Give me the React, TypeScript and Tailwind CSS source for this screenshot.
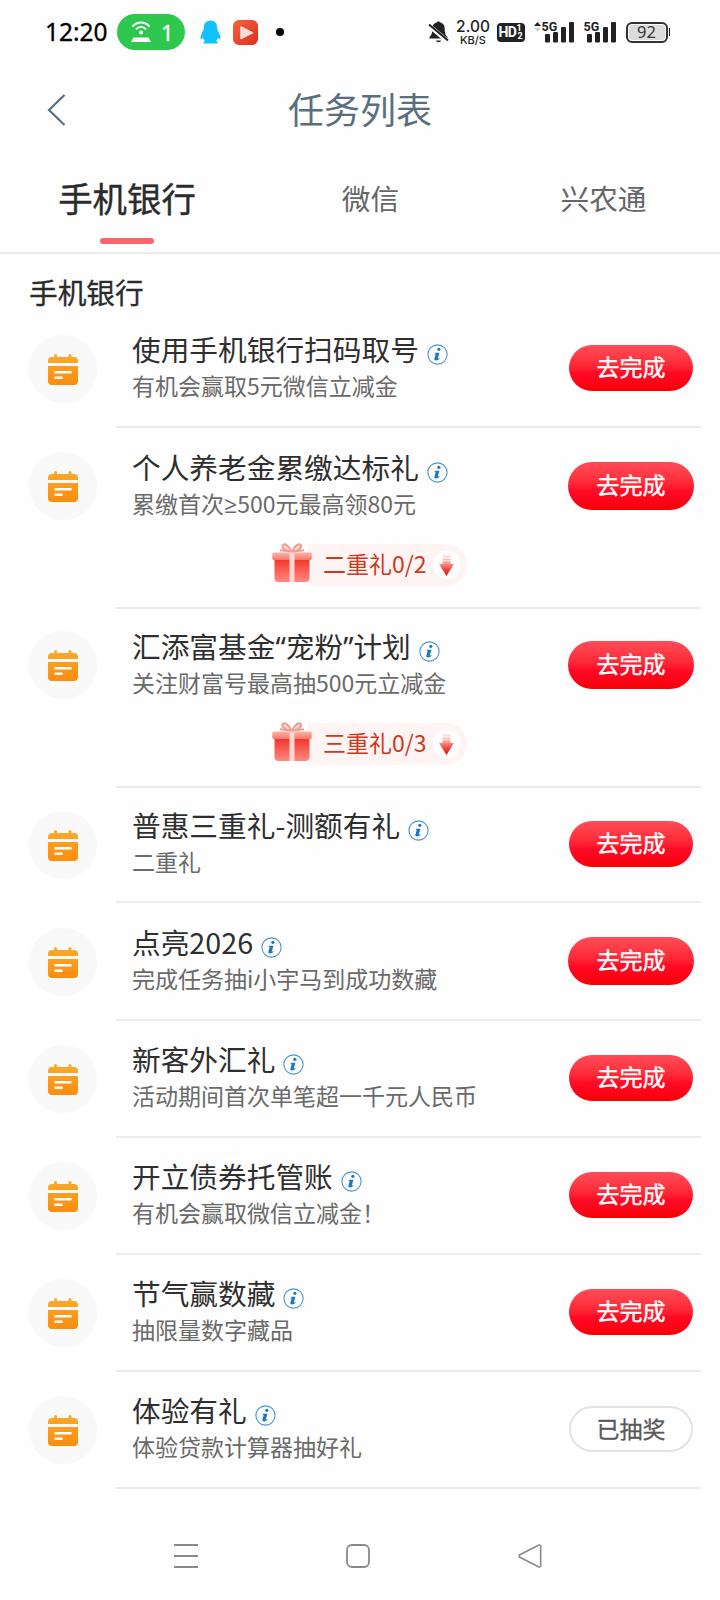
import { clsx } from "clsx";

type Task = {
  title: string;
  desc: string;
  gift?: string;
  done?: boolean;
  large?: boolean;
  size: string;
};

const tasks: Task[] = [
  { title: "使用手机银行扫码取号", desc: "有机会赢取5元微信立减金", size: "h-[118px] pt-[19px]" },
  { title: "个人养老金累缴达标礼", desc: "累缴首次≥500元最高领80元", gift: "二重礼0/2", large: true, size: "h-[181px] pt-[19px]" },
  { title: "汇添富基金“宠粉”计划", desc: "关注财富号最高抽500元立减金", gift: "三重礼0/3", large: true, size: "h-[179px] pt-[17px]" },
  { title: "普惠三重礼-测额有礼", desc: "二重礼", size: "h-[115px] pt-[17px]" },
  { title: "点亮2026", desc: "完成任务抽i小宇马到成功数藏", large: true, size: "h-[118px] pt-[19px]" },
  { title: "新客外汇礼", desc: "活动期间首次单笔超一千元人民币", size: "h-[117px] pt-[18px]" },
  { title: "开立债券托管账", desc: "有机会赢取微信立减金！", size: "h-[117px] pt-[18px]" },
  { title: "节气赢数藏", desc: "抽限量数字藏品", size: "h-[117px] pt-[18px]" },
  { title: "体验有礼", desc: "体验贷款计算器抽好礼", done: true, size: "h-[117px] pt-[18px]" },
];

// Quotes and ≥ are full width in the CJK font, so set them in the latin one
function MixedText({ text }: { text: string }) {
  return text.split(/([“”≥])/).map((part, i) =>
    /[“”≥]/.test(part) ? (
      <span key={i} className="font-['Noto_Sans','Open_Sans',sans-serif] leading-none">
        {part}
      </span>
    ) : (
      part
    )
  );
}

function Signal() {
  return (
    <svg width="29" height="21" viewBox="0 0 29 21" fill="#222">
      <rect x="0" y="12" width="5" height="8.5" rx="1" />
      <rect x="8" y="10" width="5" height="10.5" rx="1" />
      <rect x="16" y="5" width="5" height="15.5" rx="1" />
      <rect x="24" y="0" width="5" height="20.5" rx="1" />
    </svg>
  );
}

function StatusBar() {
  return (
    <div className="flex h-16 items-center pl-[45px] pr-[50px] font-['Noto_Sans','Open_Sans',sans-serif] text-black">
      <span className="w-[63px] whitespace-nowrap text-[24.5px] leading-none [-webkit-text-stroke:0.3px_black]">12:20</span>
      <div className="ml-[9px] flex h-9 w-[68px] items-center rounded-full bg-[#2fc84f] pl-[14px] text-white">
        <svg width="20" height="22" viewBox="0 0 20 22" fill="none" stroke="#fff" strokeWidth="2">
          <path d="M1.5 5.5C6 0.2 14 0.2 18.5 5.5M5 8.2c3-3 7-3 10 0" />
          <circle cx="10" cy="11.5" r="2" fill="#fff" stroke="none" />
          <path d="M2.500 16.500h15l2.500 4.500H0z" fill="#fff" stroke="none" />
        </svg>
        <span className="ml-2.5 text-[22px] leading-none [-webkit-text-stroke:0.3px_white]">1</span>
      </div>
      <svg className="ml-[15px]" width="21" height="24" viewBox="0 0 21 24" fill="#12c0fb">
        <path d="M10.5 0.5C6.3 0.5 3.8 3.5 3.8 7.5c0 1.2-.1 2.2-.7 3.4C1.4 13.6.2 16.2.5 18.8c.5 1.1 1.700-.2 2.500-1.300.2 1.500.9 2.600 1.900 3.500-1.200.5-1.600 1.300-1.400 2.500h14c.2-1.200-.2-2-1.400-2.500 1-.9 1.700-2 1.900-3.500.8 1.100 2 2.400 2.500 1.300.3-2.600-.9-5.200-2.600-7.900-.6-1.200-.7-2.200-.7-3.400 0-4-2.500-7-6.700-7z" />
      </svg>
      <svg className="ml-[12px]" width="25" height="25" viewBox="0 0 25 25">
        <defs>
          <linearGradient id="player" x1="0" y1="0" x2="1" y2="1">
            <stop offset="0" stopColor="#f4623a" />
            <stop offset="1" stopColor="#e02f1e" />
          </linearGradient>
        </defs>
        <rect width="25" height="25" rx="6" fill="url(#player)" />
        <path d="M8 7v11.500l11.500-5.700z" fill="#fde0d8" stroke="#fde0d8" strokeWidth="1.500" strokeLinejoin="round" />
      </svg>
      <span className="ml-[18px] size-2 rounded-full bg-black" />

      <div className="ml-auto flex items-center text-[#222]">
        <svg width="21" height="22" viewBox="0 0 21 22" fill="#222">
          <path d="M9 1.200C9 .4 12 .4 12 1.200c3.300.8 4.700 3.300 4.700 6.300 0 5 .8 6.500 2.800 8.500v1.500h-18V16c2-2 2.800-3.500 2.800-8.500 0-3 1.400-5.500 4.700-6.300zM8 19.500h5c-.6 2.300-4.400 2.300-5 0z" />
          <path d="M-.5 3.500 20 20.500" stroke="#fff" strokeWidth="4.500" />
          <path d="M1 3.500 20 19.500" stroke="#222" strokeWidth="2" />
        </svg>
        <div className="ml-[8px] mt-px flex w-[33px] flex-col items-center font-['Inter',sans-serif]">
          <span className="h-[14px] text-[15.5px] font-medium leading-[14px]">2.00</span>
          <span className="h-[12px] text-[11px] font-medium leading-[13px]">KB/S</span>
        </div>
        <div className="ml-[7px] flex h-[19px] w-7 items-center justify-center rounded bg-[#222] font-['Roboto',sans-serif] text-white">
          <span className="text-[14px] font-bold leading-none tracking-[-0.5px]">HD</span>
          <span className="flex flex-col text-[9px] font-bold leading-[8px]">
            <span>1</span>
            <span className="pl-px">2</span>
          </span>
        </div>
        <div className="relative ml-[20px]">
          <svg className="absolute -left-[11px] top-0" width="7" height="10" viewBox="0 0 7 10">
            <path d="M0 4 3.500 0 7 4z" fill="#222" />
            <path d="M0 6h7L3.500 9.500z" fill="#ccc" />
          </svg>
          <Signal />
          <span className="absolute -left-[3px] -top-px bg-[#fefefe] font-['Roboto',sans-serif] text-[12.5px] font-bold leading-[11px]">5G</span>
        </div>
        <div className="relative ml-[13px]">
          <Signal />
          <span className="absolute -left-[3px] -top-px bg-[#fefefe] font-['Roboto',sans-serif] text-[12.5px] font-bold leading-[11px]">5G</span>
        </div>
        <div className="ml-[10px] flex items-center">
          <div className="flex h-[21px] w-[42px] items-center justify-center rounded-[6px] border-2 border-[#333] bg-[#dcdcdc] font-['Noto_Sans',sans-serif] text-[16.5px] leading-none text-[#333] shadow-[inset_0_0_0_1px_#fff]">
            92
          </div>
          <span className="ml-px h-2 w-[1.5px] bg-[#222]" />
        </div>
      </div>
    </div>
  );
}

function TaskIcon() {
  return (
    <div className="flex size-[68px] shrink-0 items-center justify-center rounded-full bg-[#f9f9f9]">
      <svg width="30" height="31" viewBox="0 0 30 31">
        <defs>
          <linearGradient id="cal" x1="0" y1="0" x2="0" y2="31" gradientUnits="userSpaceOnUse">
            <stop offset="0" stopColor="#fbab2b" />
            <stop offset="1" stopColor="#fb8c0e" />
          </linearGradient>
        </defs>
        <g fill="url(#cal)">
          <path d="M0 9V7a4 4 0 0 1 4-4h2V1.500a1.500 1.500 0 0 1 3 0V3h11.500V1.500a1.500 1.500 0 0 1 3 0V3H26a4 4 0 0 1 4 4v2z" />
          <path d="M0 12h30v15a4 4 0 0 1-4 4H4a4 4 0 0 1-4-4z" />
        </g>
        <path d="M7.500 18.300h15M7.500 23.800h6" stroke="#fff" strokeWidth="2.600" strokeLinecap="round" />
      </svg>
    </div>
  );
}

function InfoIcon() {
  return (
    <svg className="relative top-[5px] ml-[8px] shrink-0" width="21" height="21" viewBox="0 0 21 21">
      <circle cx="10.500" cy="10.500" r="9.600" fill="#fff" stroke="#4a95cf" strokeWidth="1.100" />
      <circle cx="11.800" cy="5.300" r="1.600" fill="#1a78bf" />
      <path d="M7.800 8.700h4.600l-1.700 6.200c.6-.1 1-.4 1.500-.9l.5.500c-1 1.300-2.200 1.900-3.500 1.900-1.400 0-2.100-.6-1.800-1.700l1.300-4.700-1.100-.4z" fill="#1a78bf" />
    </svg>
  );
}

function GiftIcon() {
  return (
    <svg className="relative z-10 -mr-1 mb-[4px]" width="40" height="40" viewBox="0 0 40 40">
      <defs>
        <linearGradient id="box" x1="0" y1="0" x2="0" y2="1">
          <stop offset="0" stopColor="#f3352b" />
          <stop offset="1" stopColor="#ff8a80" />
        </linearGradient>
        <linearGradient id="lid" x1="0" y1="0" x2="0" y2="1">
          <stop offset="0" stopColor="#fdb3a8" />
          <stop offset="1" stopColor="#f9776c" />
        </linearGradient>
      </defs>
      <g fill="none" stroke="#f59a90" strokeWidth="2" strokeLinejoin="round">
        <path d="M19.500 10C17 3.500 12 .5 10.500 3.500c-1 2.500 3 5.500 9 6.500z" fill="#fde0dc" />
        <path d="M20 10c2.500-6.500 7.500-9.500 9-6.500 1 2.500-3 5.500-9 6.500z" fill="#fde0dc" />
        <path d="M18.500 9.500 8 8.300M21 9.500l11-1.200" />
      </g>
      <path d="M2.500 17.500h35V36a4 4 0 0 1-4 4h-27a4 4 0 0 1-4-4z" fill="url(#box)" />
      <rect x=".3" y="10.500" width="39.400" height="7.500" rx="1.500" fill="url(#lid)" />
      <rect x="17.500" y="10.500" width="5" height="29.500" fill="#fdd8d3" />
    </svg>
  );
}

function GiftBar({ text }: { text: string }) {
  return (
    <div className="mt-[17px] flex items-end pl-[140px]">
      <GiftIcon />
      <div className="flex h-[42px] items-center rounded-r-full bg-[#fff4f4] pl-[15px] pr-[6px]">
        <span className="h-[42px] whitespace-nowrap text-[23px] leading-[39px] text-[#cb3a1c]">{text}</span>
        <span className="ml-[6px] flex size-[28px] items-center justify-center rounded-full bg-white">
          <svg width="15" height="21" viewBox="0 0 15 21">
            <defs>
              <linearGradient id="arrow" x1="0" y1="0" x2="0" y2="21" gradientUnits="userSpaceOnUse">
                <stop offset="0" stopColor="#fdeae8" />
                <stop offset=".4" stopColor="#f6948b" />
                <stop offset=".7" stopColor="#ee4233" />
                <stop offset="1" stopColor="#dc1808" />
              </linearGradient>
            </defs>
            <path d="M3.500 0h8v2.500h-8zM3.500 3.500h8v2h-8zM3.500 6.300h8v2.700H15L7.500 21 0 9h3.500z" fill="url(#arrow)" />
          </svg>
        </span>
      </div>
    </div>
  );
}

function TaskButton({ done, large }: { done?: boolean; large?: boolean }) {
  if (done) {
    return (
      <button className="h-[46px] w-[124px] rounded-full border-2 border-[#e3e3e3] bg-white pb-0.5 text-[23px] leading-[40px] text-[#595959] [-webkit-text-stroke:0.3px_#595959]">
        已抽奖
      </button>
    );
  }
  return (
    <button
      className={clsx(
        "rounded-full bg-linear-to-b from-[#ff4c58] via-[#ff0a26] via-60% to-[#fa0000] pb-[3px] text-[23px] text-white [-webkit-text-stroke:0.4px_white]",
        large ? "-mx-px h-12 w-[126px]" : "h-[46px] w-[124px]"
      )}
    >
      去完成
    </button>
  );
}

function TaskRow({ task }: { task: Task }) {
  return (
    <div className="flex pl-[29px] pr-[19px]">
      <div className={clsx("w-[87px] shrink-0", task.size)}>
        <div className={task.gift ? "pt-[5px]" : "pt-[6px]"}>
          <TaskIcon />
        </div>
      </div>
      <div className={clsx("flex-1 border-b-2 border-[#ececec] pl-4", task.size)}>
        <div className="flex items-start justify-between pr-2">
          <div>
            <div className="flex h-10 items-center">
              <h3 className="h-10 whitespace-nowrap text-[28.7px] leading-10 text-[#2f2f2f]">
                <MixedText text={task.title} />
              </h3>
              <InfoIcon />
            </div>
            <p className="h-8 whitespace-nowrap text-[23px] leading-8 text-[#6a6a6a]">
              <MixedText text={task.desc} />
            </p>
          </div>
          <div className="flex h-[78px] items-center">
            <TaskButton done={task.done} large={task.large} />
          </div>
        </div>
        {task.gift && <GiftBar text={task.gift} />}
      </div>
    </div>
  );
}

export default function App() {
  return (
    <div className="flex h-[1600px] w-[720px] flex-col overflow-hidden bg-[#fefefe] font-['Noto_Sans_CJK_SC',sans-serif]">
      <StatusBar />
      <header className="flex h-[92px] items-center pl-[47px] pr-[47px]">
        <svg width="19" height="32" viewBox="0 0 19 32" fill="none" stroke="#587080" strokeWidth="2.200">
          <path d="M17.500 1 2 16l15.500 15" />
        </svg>
        <h1 className="flex-1 pb-1 pr-[19px] text-center text-[36px] leading-[60px] text-[#5a6f7d]">任务列表</h1>
      </header>
      <nav className="flex h-[98px] shrink-0 border-b-2 border-[#ececec]">
        <div className="flex w-[254px] flex-col items-center pt-4">
          <span className="text-[34.4px] leading-[50px] text-[#2b2b2b] [-webkit-text-stroke:0.4px_#2b2b2b]">手机银行</span>
          <span className="mt-4 h-1.5 w-[54px] rounded-full bg-[#fb656d]" />
        </div>
        <div className="w-[233px] pt-[18px] text-center text-[28.7px] leading-[48px] text-[#666]">微信</div>
        <div className="w-[233px] pt-[18px] text-center text-[28.7px] leading-[48px] text-[#666]">兴农通</div>
      </nav>
      <h2 className="h-[56px] shrink-0 pl-[29px] pt-4 text-[28.7px] leading-[44px] text-[#2b2b2b] [-webkit-text-stroke:0.3px_#2b2b2b]">
        手机银行
      </h2>
      <main>
        {tasks.map((task) => (
          <TaskRow key={task.title} task={task} />
        ))}
      </main>
      <footer className="flex flex-1 items-center justify-center gap-[148px] pr-1 pt-[23px]">
        <svg width="24" height="24" viewBox="0 0 24 24" stroke="#8a8a8a" strokeWidth="2">
          <path d="M0 1h24M0 12h24M0 23h24" />
        </svg>
        <svg width="24" height="24" viewBox="0 0 24 24" fill="none" stroke="#8a8a8a" strokeWidth="1.800">
          <rect x="1" y="1" width="22" height="22" rx="5" />
        </svg>
        <svg width="24" height="24" viewBox="0 0 24 24" fill="none" stroke="#8a8a8a" strokeWidth="1.600" strokeLinejoin="round">
          <path d="M20.500 1.300 1.800 10.700q-1.600 1.300 0 2.600l18.700 9.400q2.200.8 2.200-1.200v-19q0-2-2.200-1.200z" />
        </svg>
      </footer>
    </div>
  );
}
